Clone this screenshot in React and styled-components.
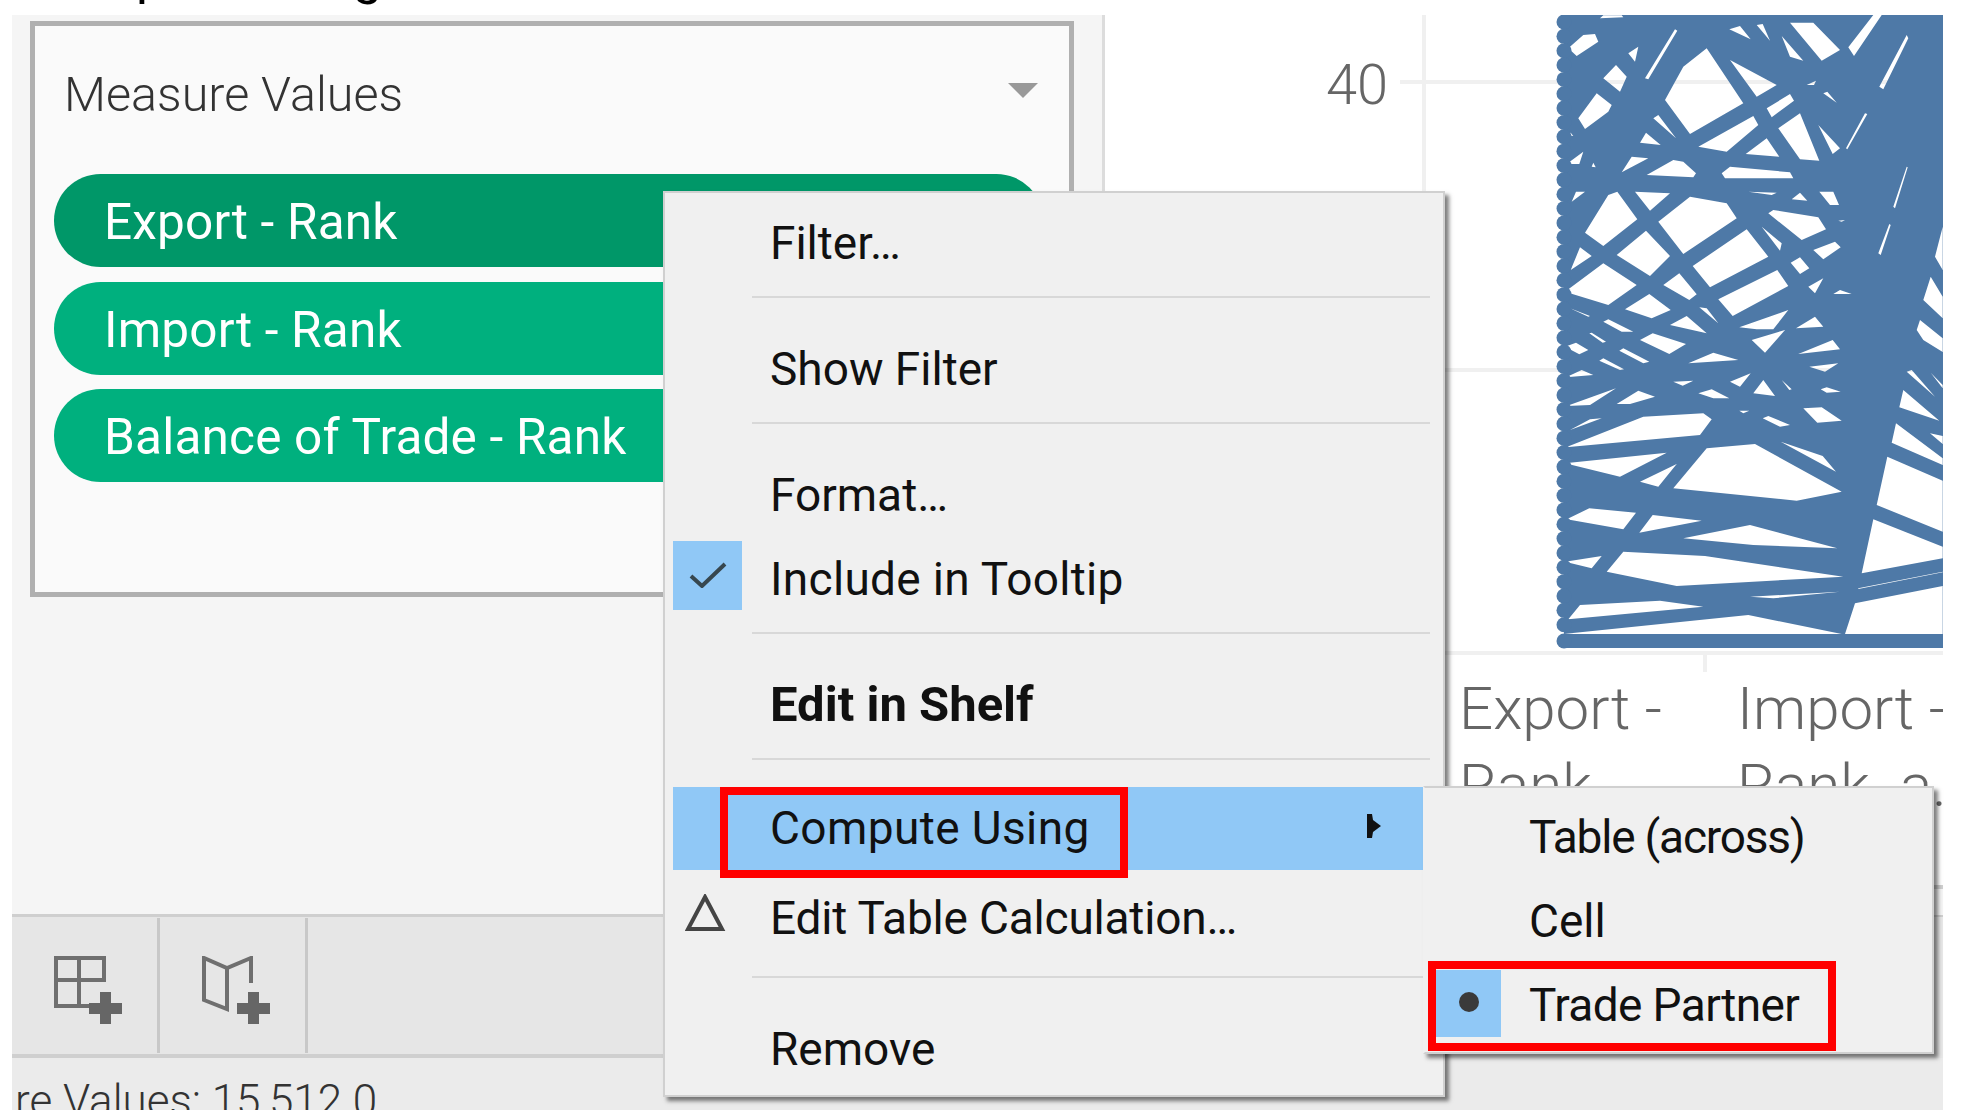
import React from "react";
import styled, { createGlobalStyle } from "styled-components";

const GlobalStyle = createGlobalStyle`
  html, body {
    margin: 0;
    padding: 0;
    background: #fff;
    overflow: hidden;
  }
  * {
    box-sizing: border-box;
  }
`;

// holes of the line mass, traced in two 3x crops of the plot
const upperHoles = [
  [[85,115],[130,75],[165,72],[175,95],[110,138]],
  [[190,205],[228,165],[260,200],[240,245]],
  [[115,325],[170,250],[215,285],[205,305],[135,357]],
  [[375,270],[430,170],[500,115],[610,280],[450,372]],
  [[315,205],[405,58],[412,62],[325,208]],
  [[265,130],[295,110],[285,155]],
  [[340,325],[355,315],[408,385]],
  [[300,398],[318,368],[362,405]],
  [[245,487],[275,440],[325,445]],
  [[80,462],[130,425],[118,462]],
  [[155,470],[160,458],[167,472]],
  [[75,375],[92,368],[100,378]],
  [[320,495],[400,450],[430,455],[468,490],[460,502]],
  [[475,410],[640,318],[655,345],[560,425]],
  [[617,432],[680,385],[718,440]],
  [[545,490],[570,470],[750,487],[760,505],[555,505]],
  [[285,545],[390,550],[330,602]],
  [[570,150],[710,225],[650,260]],
  [[568,58],[600,48],[632,88]],
  [[650,45],[668,42],[690,92]],
  [[750,38],[820,38],[900,120],[845,152]],
  [[725,78],[790,152],[750,140]],
  [[925,112],[1000,15],[1025,15],[942,138]],
  [[1018,230],[1100,75],[1105,85],[1030,238]],
  [[680,295],[750,252],[762,272],[695,322]],
  [[715,355],[780,310],[838,452],[780,448]],
  [[835,345],[900,415],[878,432]],
  [[800,225],[828,212],[822,225]],
  [[850,250],[862,245],[890,278]],
  [[918,415],[975,310],[982,312],[922,418]],
  [[95,575],[108,545],[135,545]],
  [[135,668],[205,555],[232,545],[292,628],[190,708]],
  [[355,635],[450,560],[560,580],[590,625],[430,732]],
  [[230,735],[318,662],[390,738],[330,798]],
  [[92,780],[120,712],[155,738]],
  [[75,845],[190,760],[290,825],[205,885]],
  [[370,825],[418,790],[470,853],[448,870]],
  [[458,768],[620,658],[685,740],[510,832]],
  [[255,898],[328,852],[392,900],[335,925]],
  [[535,868],[712,780],[745,828],[578,918]],
  [[625,545],[710,548],[695,555]],
  [[755,568],[780,548],[802,572]],
  [[838,545],[880,545],[897,585],[870,585]],
  [[685,610],[700,600],[835,622],[858,658],[785,690]],
  [[665,650],[725,700],[720,722]],
  [[752,758],[780,742],[808,775],[780,792]],
  [[820,720],[885,695],[902,712],[850,748]],
  [[805,830],[850,805],[825,850]],
  [[880,852],[900,840],[935,852]],
  [[895,632],[915,630],[905,635]],
  [[1060,590],[1100,470],[1103,472],[1065,595]],
  [[1015,730],[1048,642],[1052,645],[1022,735]],
  [[1185,740],[1208,650],[1208,780]],
  [[1150,870],[1172,800],[1208,860],[1208,925]],
  [[1130,960],[1140,930],[1208,985],[1208,1026],[1150,990]],
  [[478,892],[500,895],[535,940]],
  [[390,945],[440,918],[500,970]],
  [[598,952],[745,900],[700,958],[650,958]],
  [[768,955],[825,920],[850,950]],
  [[190,935],[205,928],[280,965],[245,965]],
  [[90,895],[150,918],[145,920]],
  [[180,25],[250,22],[245,16],[190,16]],
];

const lowerHoles = [
  [[75,50],[108,38],[145,60],[118,73]],
  [[148,10],[155,8],[198,35],[188,38]],
  [[238,62],[250,55],[328,95],[310,100]],
  [[300,30],[338,10],[438,42],[388,72]],
  [[445,100],[520,68],[595,90]],
  [[178,92],[190,85],[252,118],[240,120]],
  [[78,142],[125,120],[160,135]],
  [[400,155],[460,152],[428,167]],
  [[570,155],[632,130],[600,170]],
  [[640,190],[670,150],[705,198]],
  [[475,190],[515,178],[568,205],[520,205]],
  [[230,222],[295,182],[345,200],[270,222]],
  [[80,228],[228,175],[150,225]],
  [[90,300],[150,268],[185,265]],
  [[78,352],[310,260],[490,250],[515,268],[480,315]],
  [[75,400],[380,368],[240,440]],
  [[300,455],[410,402],[355,470]],
  [[400,475],[500,355],[645,342],[905,485],[770,512]],
  [[722,335],[848,378],[888,425]],
  [[635,30],[735,0],[675,68]],
  [[775,72],[878,30],[900,58]],
  [[808,110],[895,100],[855,125]],
  [[842,178],[860,172],[902,185],[860,188]],
  [[790,235],[845,232],[905,272],[832,278]],
  [[668,265],[685,258],[750,285],[720,290]],
  [[598,242],[628,242],[610,250]],
  [[725,150],[755,178],[748,180]],
  [[80,568],[148,535],[288,548],[250,598]],
  [[298,608],[338,555],[485,572]],
  [[430,625],[630,585],[892,655],[640,645]],
  [[75,695],[185,678],[155,715]],
  [[200,725],[250,665],[495,678],[910,740],[410,768]],
  [[85,868],[120,825],[360,812],[490,830]],
  [[630,800],[900,785],[700,805]],
  [[70,912],[625,855],[905,912]],
  [[915,912],[945,820],[1208,768],[1208,912]],
  [[965,730],[1000,568],[1208,650],[1208,685]],
  [[1010,525],[1042,380],[1208,452],[1208,605]],
  [[1055,338],[1068,280],[1208,385],[1208,405]],
  [[1078,232],[1090,180],[1198,272]],
  [[1100,125],[1115,120],[1185,200]],
  [[1172,128],[1208,165],[1208,175]],
  [[1170,310],[1208,318],[1208,342]],
  [[955,775],[1208,725],[1208,727],[955,777]],
];

const holePath = (holes, top) =>
  holes
    .map(
      (pts) =>
        "M" +
        pts.map(([x, y]) => `${(1540 + x / 3).toFixed(1)} ${(top + y / 3).toFixed(1)}`).join("L") +
        "Z"
    )
    .join("");

const massPath =
  "M1564 15H1943V648H1564Z" + holePath(upperHoles, 10) + holePath(lowerHoles, 330);

const scallops = [...Array.from({ length: 43 }, (_, i) => 22 + i * 14.35), 641];

function LinesChart() {
  return (
    <ChartSvg viewBox="1105 15 838 640">
      <g stroke="#f0f0f0" strokeWidth="4">
        <line x1="1400" y1="82" x2="1943" y2="82" />
        <line x1="1400" y1="370" x2="1943" y2="370" />
        <line x1="1424" y1="15" x2="1424" y2="654" />
        <line x1="1424" y1="653" x2="1943" y2="653" />
      </g>
      <text
        x="1388"
        y="104"
        textAnchor="end"
        fontFamily="Roboto, sans-serif"
        fontWeight="300"
        fontSize="56"
        fill="#666"
      >
        40
      </text>
      <path d={massPath} fill="#4e79a7" fillRule="evenodd" />
      {scallops.map((y) => (
        <circle key={y} cx="1564" cy={y} r="7.5" fill="#4e79a7" />
      ))}
    </ChartSvg>
  );
}

export default function App() {
  return (
    <Page>
      <GlobalStyle />
      <TopStrip>
        <Caption>Compute Using</Caption>
      </TopStrip>
      <Main>
        <LeftColumn>
          <LeftPanel>
            <Card>
              <TitleRow>
                <CardTitle>Measure Values</CardTitle>
                <Caret />
              </TitleRow>
              <PillList>
                <Pill $active>Export - Rank</Pill>
                <Pill>Import - Rank</Pill>
                <Pill>Balance of Trade - Rank</Pill>
              </PillList>
            </Card>
          </LeftPanel>
          <Toolbar>
            <ToolCell>
              <svg width="72" height="72" viewBox="0 0 72 72">
                <path d="M36 50H2V2H50V24H2M25 2V50" fill="none" stroke="#6f6f6f" strokeWidth="4" />
                <path d="M46 36H57V47H68V58H57V68H46V58H35V47H46Z" fill="#666" />
              </svg>
            </ToolCell>
            <ToolCell>
              <svg width="72" height="72" viewBox="0 0 72 72">
                <path d="M49 27V2L25 12L2 2V44L25 53V12" fill="none" stroke="#6f6f6f" strokeWidth="4" />
                <path d="M46 36H57V47H68V58H57V68H46V58H35V47H46Z" fill="#666" />
              </svg>
            </ToolCell>
          </Toolbar>
        </LeftColumn>
        <RightColumn>
          <LinesChart />
          <HeaderRow>
            <HeaderTick />
            <HeaderLabel>
              Export -<br />
              Rank
            </HeaderLabel>
            <HeaderLabel>
              Import -<br />
              <TightLine>Rank - a...</TightLine>
            </HeaderLabel>
          </HeaderRow>
          <LightBand />
          <GreyBand />
        </RightColumn>
      </Main>
      <StatusBar>re Values: 15,512.0</StatusBar>

      <ContextMenu>
        <MenuRow>
          <Slot />
          <MenuLabel>Filter…</MenuLabel>
        </MenuRow>
        <Separator />
        <MenuRow>
          <Slot />
          <MenuLabel>Show Filter</MenuLabel>
        </MenuRow>
        <Separator />
        <MenuRow>
          <Slot />
          <MenuLabel>Format…</MenuLabel>
        </MenuRow>
        <MenuRow $gap={1}>
          <Slot $checked>
            <svg width="38" height="26" viewBox="0 0 38 26">
              <path d="M2 14L13 24L36 2" fill="none" stroke="#37474f" strokeWidth="4" />
            </svg>
          </Slot>
          <MenuLabel $track={0.3}>Include in Tooltip</MenuLabel>
        </MenuRow>
        <Separator />
        <MenuRow>
          <Slot />
          <MenuLabel $bold>Edit in Shelf</MenuLabel>
        </MenuRow>
        <Separator $after={27} />
        <MenuRow $selected>
          <Slot />
          <MenuLabel $track={0.4}>Compute Using</MenuLabel>
          <SubArrow viewBox="0 0 14 24" width="14" height="24">
            <path d="M0 0H5L6 6L14 12L6 18L5 24H0Z" fill="#111" />
          </SubArrow>
          <RedBox $left={47} $top={0} $width={408} $height={91} />
        </MenuRow>
        <MenuRow $gap={7}>
          <Slot $raise={12}>
            <svg width="46" height="38" viewBox="0 0 46 38">
              <path d="M20 3L37 35H3Z" fill="none" stroke="#444" strokeWidth="4" />
            </svg>
          </Slot>
          <MenuLabel $track={-0.2}>Edit Table Calculation…</MenuLabel>
        </MenuRow>
        <Separator $before={16} />
        <MenuRow>
          <Slot />
          <MenuLabel>Remove</MenuLabel>
        </MenuRow>
      </ContextMenu>

      <SubMenu>
        <SubRow>
          <SubSlot />
          <MenuLabel $track={-1.2}>Table (across)</MenuLabel>
        </SubRow>
        <SubRow>
          <SubSlot />
          <MenuLabel>Cell</MenuLabel>
        </SubRow>
        <SubRow>
          <SubSlot $checked>
            <Dot />
          </SubSlot>
          <MenuLabel $track={-0.6}>Trade Partner</MenuLabel>
          <RedBox $left={-8} $top={-3} $width={408} $height={90} />
        </SubRow>
      </SubMenu>
    </Page>
  );
}

const Page = styled.div`
  position: relative;
  width: 1970px;
  height: 1110px;
  overflow: hidden;
  background: #fff;
  font-family: Roboto, "Liberation Sans", sans-serif;
  display: flex;
  flex-direction: column;
`;

const TopStrip = styled.div`
  height: 15px;
  flex: none;
  overflow: hidden;
  padding-left: 27px;
`;

const Caption = styled.div`
  font-size: 52px;
  line-height: 52px;
  margin-top: -50px;
  color: #000;
`;

const Main = styled.div`
  display: flex;
  height: 1043px;
  flex: none;
  margin: 0 27px 0 12px;
`;

const LeftColumn = styled.div`
  width: 1093px;
  flex: none;
  display: flex;
  flex-direction: column;
`;

const LeftPanel = styled.div`
  height: 899px;
  flex: none;
  background: #f5f5f5;
  border-right: 3px solid #dcdcdc;
  padding: 6px 28px 0 18px;
`;

const Card = styled.div`
  height: 576px;
  background: #fafafa;
  border: 5px solid #b0b0b0;
`;

const TitleRow = styled.div`
  height: 134px;
  margin-bottom: 14px;
  display: flex;
  align-items: center;
  justify-content: space-between;
  padding: 0 31px 0 29px;
`;

const CardTitle = styled.div`
  font-size: 48.5px;
  font-weight: 300;
  color: #333;
  margin-top: 3px;
`;

const Caret = styled.div`
  width: 0;
  height: 0;
  margin-bottom: 6px;
  border-left: 15px solid transparent;
  border-right: 15px solid transparent;
  border-top: 15px solid #999;
`;

const PillList = styled.div`
  display: flex;
  flex-direction: column;
  gap: 14.5px;
  padding: 0 26px 0 19px;
`;

const Pill = styled.div`
  height: 93px;
  border-radius: 47px;
  background: ${(p) => (p.$active ? "#009768" : "#00b07e")};
  color: #fff;
  font-size: 49.5px;
  letter-spacing: 0.2px;
  line-height: 97px;
  padding-left: 50px;
`;

const Toolbar = styled.div`
  height: 144px;
  flex: none;
  display: flex;
  background: #e6e6e6;
  border-top: 3px solid #cfcfcf;
  border-bottom: 4px solid #cfcfcf;
`;

const ToolCell = styled.div`
  width: 148px;
  margin: 1px 0;
  padding: 38px 0 0 42px;
  border-right: 3px solid #c8c8c8;
`;

const RightColumn = styled.div`
  flex: 1;
  min-width: 0;
  display: flex;
  flex-direction: column;
`;

const ChartSvg = styled.svg`
  display: block;
  width: 838px;
  height: 640px;
  flex: none;
`;

const HeaderRow = styled.div`
  position: relative;
  height: 230px;
  flex: none;
  display: grid;
  grid-template-columns: 278px 1fr;
  padding: 15px 0 0 354px;
  overflow: hidden;
`;

const HeaderTick = styled.div`
  position: absolute;
  left: 598px;
  top: 0;
  width: 4px;
  height: 17px;
  background: #f0f0f0;
`;

const HeaderLabel = styled.div`
  font-size: 60px;
  line-height: 77px;
  font-weight: 300;
  color: #666;
  white-space: nowrap;
`;

const TightLine = styled.span`
  word-spacing: -8px;
`;

const LightBand = styled.div`
  height: 32px;
  flex: none;
  background: #f5f5f5;
  border-top: 4px solid #cfcfcf;
  border-bottom: 2px solid #cfcfcf;
`;

const GreyBand = styled.div`
  flex: 1;
  background: #e8e8e8;
`;

const StatusBar = styled.div`
  height: 52px;
  flex: none;
  margin: 0 27px 0 12px;
  padding-left: 3px;
  overflow: hidden;
  background: #ebebeb;
  color: #333;
  font-size: 44px;
  font-weight: 300;
  line-height: 86px;
`;

const ContextMenu = styled.div`
  position: absolute;
  left: 663px;
  top: 191px;
  width: 782px;
  height: 906px;
  padding: 9px 0 0 8px;
  background: #f0f0f0;
  border: 2px solid #d0d0d0;
  box-shadow: 4px 4px 4px rgba(0, 0, 0, 0.5);
`;

const MenuRow = styled.div`
  position: relative;
  width: 750px;
  height: 83px;
  margin-top: ${(p) => p.$gap || 0}px;
  display: flex;
  align-items: center;
  gap: 28px;
  background: ${(p) => (p.$selected ? "#90c8f6" : "transparent")};
`;

const Slot = styled.div`
  width: 69px;
  height: 69px;
  flex: none;
  display: flex;
  align-items: center;
  justify-content: center;
  margin-bottom: ${(p) => p.$raise || (p.$checked ? 9 : 0)}px;
  background: ${(p) => (p.$checked ? "#90c8f6" : "transparent")};
`;

const MenuLabel = styled.span`
  font-size: ${(p) => (p.$bold ? 49 : 46)}px;
  font-weight: ${(p) => (p.$bold ? 700 : 400)};
  letter-spacing: ${(p) => p.$track || 0}px;
  margin-bottom: 2px;
  color: #111;
  white-space: nowrap;
`;

const Separator = styled.div`
  height: 2px;
  width: 678px;
  margin: ${(p) => p.$before ?? 11}px 0 ${(p) => p.$after ?? 30}px 79px;
  background: #d8d8d8;
`;

const SubArrow = styled.svg`
  position: absolute;
  left: 694px;
  top: 27px;
`;

const RedBox = styled.div`
  position: absolute;
  left: ${(p) => p.$left}px;
  top: ${(p) => p.$top}px;
  width: ${(p) => p.$width}px;
  height: ${(p) => p.$height}px;
  border: 8px solid #ff0000;
`;

const SubMenu = styled.div`
  position: absolute;
  left: 1423px;
  top: 786px;
  width: 511px;
  height: 268px;
  padding: 8px 0 0 11px;
  background: #f0f0f0;
  border: 2px solid #d0d0d0;
  border-left: 2px solid #f0f0f0;
  box-shadow: 4px 4px 4px rgba(0, 0, 0, 0.5);
`;

const SubRow = styled.div`
  position: relative;
  height: 84px;
  display: flex;
  align-items: center;
  gap: 28px;
`;

const SubSlot = styled.div`
  width: 65px;
  height: 67px;
  flex: none;
  margin-bottom: 6px;
  display: flex;
  align-items: center;
  justify-content: center;
  background: ${(p) => (p.$checked ? "#90c8f6" : "transparent")};
`;

const Dot = styled.div`
  width: 20px;
  height: 20px;
  margin-bottom: 2px;
  border-radius: 50%;
  background: #3a3a3a;
`;
